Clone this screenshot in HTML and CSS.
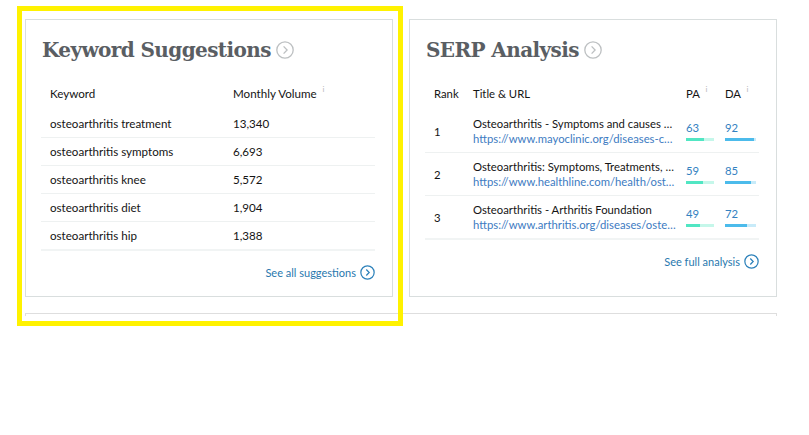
FILE: index.html
```html
<!DOCTYPE html>
<html lang="en">
  <head>
    <meta charset="UTF-8" />
    <meta name="viewport" content="width=device-width, initial-scale=1.0" />
    <title>Keyword Explorer | osteoarthritis</title>
    <link rel="stylesheet" href="styles.css">
  </head>
  <body>
    <div class="page">
      <div class="grid">
        <section class="card">
          <h2 class="card-title">
            Keyword Suggestions
            <svg class="title-icon" viewBox="0 0 18 18"><circle cx="9" cy="9" r="8.2" /><path d="M7.6 5.4 11.1 9 7.6 12.6" /></svg>
          </h2>
          <table class="data">
            <thead>
              <tr>
                <th class="col-keyword">Keyword</th>
                <th>Monthly Volume <span class="info">i</span></th>
              </tr>
            </thead>
            <tbody>
              <tr><td>osteoarthritis treatment</td><td>13,340</td></tr>
              <tr><td>osteoarthritis symptoms</td><td>6,693</td></tr>
              <tr><td>osteoarthritis knee</td><td>5,572</td></tr>
              <tr><td>osteoarthritis diet</td><td>1,904</td></tr>
              <tr><td>osteoarthritis hip</td><td>1,388</td></tr>
            </tbody>
          </table>
          <div class="card-footer">
            <a href="#" class="more">See all suggestions
              <svg class="more-icon" viewBox="0 0 16 16"><circle cx="8" cy="8" r="7.1" /><path d="M6.7 4.8 9.8 8 6.7 11.2" /></svg>
            </a>
          </div>
        </section>

        <section class="card">
          <h2 class="card-title">
            SERP Analysis
            <svg class="title-icon" viewBox="0 0 18 18"><circle cx="9" cy="9" r="8.2" /><path d="M7.6 5.4 11.1 9 7.6 12.6" /></svg>
          </h2>
          <table class="data serp">
            <thead>
              <tr>
                <th class="col-rank">Rank</th>
                <th class="col-title">Title &amp; URL</th>
                <th class="col-pa">PA <span class="info">i</span></th>
                <th class="col-da">DA <span class="info">i</span></th>
              </tr>
            </thead>
            <tbody>
              <tr>
                <td>1</td>
                <td class="result">
                  <div class="result-title">Osteoarthritis - Symptoms and causes - Mayo Clinic</div>
                  <div class="result-url">https://www.mayoclinic.org/diseases-conditions/osteoarthritis/symptoms-causes</div>
                </td>
                <td>
                  <div class="score">63</div>
                  <div class="bar pa"><div class="fill" style="width: 63%"></div></div>
                </td>
                <td>
                  <div class="score">92</div>
                  <div class="bar da"><div class="fill" style="width: 92%"></div></div>
                </td>
              </tr>
              <tr>
                <td>2</td>
                <td class="result">
                  <div class="result-title">Osteoarthritis: Symptoms, Treatments, and Causes</div>
                  <div class="result-url">https://www.healthline.com/health/osteoarthritis</div>
                </td>
                <td>
                  <div class="score">59</div>
                  <div class="bar pa"><div class="fill" style="width: 59%"></div></div>
                </td>
                <td>
                  <div class="score">85</div>
                  <div class="bar da"><div class="fill" style="width: 85%"></div></div>
                </td>
              </tr>
              <tr>
                <td>3</td>
                <td class="result">
                  <div class="result-title">Osteoarthritis - Arthritis Foundation</div>
                  <div class="result-url">https://www.arthritis.org/diseases/osteoarthritis</div>
                </td>
                <td>
                  <div class="score">49</div>
                  <div class="bar pa"><div class="fill" style="width: 49%"></div></div>
                </td>
                <td>
                  <div class="score">72</div>
                  <div class="bar da"><div class="fill" style="width: 72%"></div></div>
                </td>
              </tr>
            </tbody>
          </table>
          <div class="card-footer">
            <a href="#" class="more">See full analysis
              <svg class="more-icon" viewBox="0 0 16 16"><circle cx="8" cy="8" r="7.1" /><path d="M6.7 4.8 9.8 8 6.7 11.2" /></svg>
            </a>
          </div>
        </section>

        <section class="card wide"></section>
      </div>
    </div>
    <div class="highlight"></div>
  </body>
</html>
```

FILE: styles.css
```css
body {
  margin: 0;
  background-color: white;
  font-family: "Lato", "Open Sans", sans-serif;
  color: hsl(0, 0%, 12%);
}
.page {
  height: 316px;
  overflow: hidden;
  padding: 19px 0 0 25px;
  box-sizing: border-box;
}
.grid {
  width: 752px;
  display: grid;
  grid-template-columns: 1fr 1fr;
  column-gap: 16px;
  row-gap: 16px;
}
.card {
  border: 1px solid hsl(180, 7%, 86%);
  padding: 0 17px 16px 15px;
  background-color: white;
}
.card.wide {
  grid-column: 1 / 3;
  height: 200px;
  border-color: hsl(0, 0%, 87%);
}
.card-title {
  margin: 0;
  padding-top: 17px;
  height: 43px;
  box-sizing: border-box;
  display: flex;
  align-items: center;
  gap: 5px;
  padding-left: 1px;
  font-family: "DejaVu Serif", serif;
  font-weight: bold;
  font-size: 20px;
  letter-spacing: -0.6px;
  color: hsl(210, 5%, 37%);
}
.title-icon {
  width: 18px;
  height: 18px;
  fill: none;
  stroke: hsl(200, 4%, 75%);
  stroke-width: 1.3;
}
.data {
  width: 100%;
  border-collapse: collapse;
  font-size: 11.6px;
  margin-top: 13px;
}
.data th {
  text-align: left;
  font-weight: normal;
  height: 34px;
  padding: 0 0 0 9px;
  vertical-align: middle;
  color: hsl(0, 0%, 8%);
}
.data td {
  height: 27px;
  padding: 0 0 0 9px;
  border-bottom: 1px solid hsl(180, 10%, 94%);
  vertical-align: middle;
  color: hsl(0, 0%, 8%);
}
.data tbody tr:last-child td {
  border-bottom-width: 2px;
  border-bottom-color: hsl(180, 12%, 95%);
}
.col-keyword {
  width: 174px;
}
.info {
  position: relative;
  top: -6px;
  margin-left: 3px;
  font-size: 8px;
  color: hsl(0, 0%, 72%);
}
.serp {
  font-size: 11.3px;
}
.serp td {
  height: 42px;
}
.col-rank {
  width: 30px;
}
.col-pa {
  width: 30px;
}
.col-da {
  width: 34px;
}
.serp .result {
  padding-right: 1px;
  max-width: 0;
}
.result-title,
.result-url {
  line-height: 15px;
  white-space: nowrap;
  overflow: hidden;
  text-overflow: ellipsis;
}
.data .result-url {
  color: hsl(212, 52%, 50%);
}
.score {
  font-size: 11.3px;
  line-height: 14px;
  color: hsl(207, 58%, 48%);
}
.bar {
  margin-top: 3px;
  height: 3px;
  width: 28px;
}
.bar.pa {
  background-color: hsl(165, 75%, 87%);
}
.bar.pa .fill {
  height: 100%;
  background-color: hsl(166, 75%, 61%);
}
.bar.da {
  width: 31px;
  background-color: hsl(197, 80%, 88%);
}
.bar.da .fill {
  height: 100%;
  background-color: hsl(198, 80%, 61%);
}
.card-footer {
  margin-top: 10px;
  text-align: right;
}
.more {
  display: inline-flex;
  align-items: center;
  gap: 4px;
  font-size: 11px;
  color: hsl(204, 62%, 42%);
  text-decoration: none;
}
.more-icon {
  width: 15px;
  height: 15px;
  fill: none;
  stroke: hsl(204, 62%, 45%);
  stroke-width: 1.3;
}
.highlight {
  position: absolute;
  left: 17px;
  top: 6px;
  width: 386px;
  height: 320px;
  box-sizing: border-box;
  border: 5px solid hsl(57, 100%, 50%);
  pointer-events: none;
}
```
